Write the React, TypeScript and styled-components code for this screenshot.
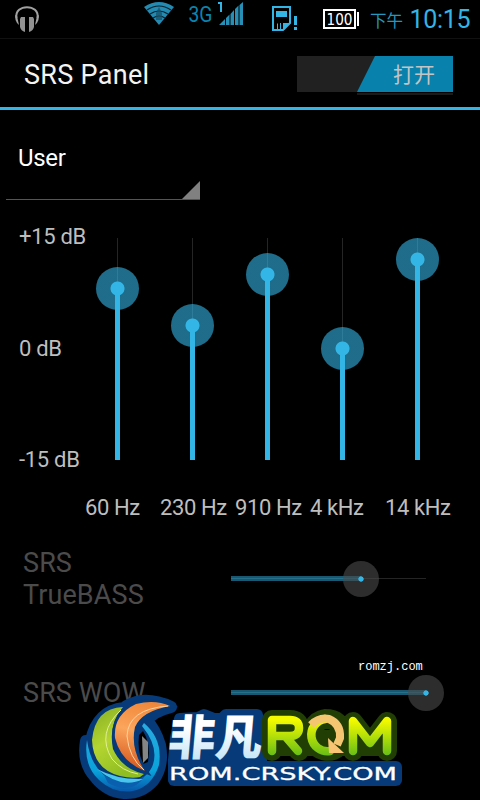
import styled, { createGlobalStyle } from 'styled-components';

const GlobalStyle = createGlobalStyle`
  body {
    margin: 0;
    background: #000;
    overflow: hidden;
  }
`;

const Screen = styled.div`
  position: relative;
  width: 480px;
  height: 800px;
  overflow: hidden;
  background: #000;
  color: #bebebe;
  font-family: Roboto, 'Noto Sans CJK SC', sans-serif;
`;

const StatusBar = styled.div`
  display: flex;
  box-sizing: border-box;
  height: 39px;
  border-bottom: 1px solid #111;
`;

const Header = styled.header`
  display: flex;
  justify-content: space-between;
  box-sizing: border-box;
  height: 71px;
  padding: 17px 27px 0 24px;
  border-bottom: 3px solid #33b5e5;
`;

const Title = styled.h1`
  margin: 4px 0 0;
  color: #f3f3f3;
  font-size: 27px;
  font-weight: 400;
  line-height: 30px;
  letter-spacing: 0.3px;
`;

const Toggle = styled.div`
  width: 156px;
  height: 36px;
  background: #212121;
`;

const ToggleThumb = styled.div`
  box-sizing: border-box;
  width: 96px;
  height: 36px;
  margin-left: 60px;
  padding-left: 36px;
  background: #0882ad;
  clip-path: polygon(18px 0, 100% 0, 100% 100%, 0 100%);
  color: #c4c4c4;
  font-size: 21px;
  line-height: 39px;
`;

const ToggleShadow = styled.div`
  height: 2px;
  margin: 1px 0 0 60px;
  background: #1a1a1a;
`;

const Spinner = styled.div`
  display: flex;
  justify-content: space-between;
  align-items: flex-end;
  box-sizing: border-box;
  width: 194px;
  height: 60px;
  margin: 30px 0 0 6px;
  padding-left: 12px;
  border-bottom: 1px solid #555;
`;

const SpinnerText = styled.span`
  align-self: flex-start;
  padding-top: 4px;
  color: #fff;
  font-size: 24px;
  line-height: 29px;
  letter-spacing: -0.3px;
`;

const SpinnerArrow = styled.i`
  width: 18px;
  height: 18px;
  background: #808080;
  clip-path: polygon(100% 0, 100% 100%, 0 100%);
`;

const Equalizer = styled.section`
  display: flex;
  height: 332px;
  padding: 24px 0 0 19px;
  box-sizing: border-box;
  font-size: 22px;
  line-height: 25px;
`;

const Scale = styled.div`
  display: flex;
  flex-direction: column;
  justify-content: space-between;
  width: 61px;
  height: 248px;
  white-space: nowrap;
  letter-spacing: -0.3px;
`;

const Bands = styled.div`
  display: grid;
  grid-template-columns: repeat(5, 75px);
  padding-top: 14px;
`;

const Band = styled.div`
  display: flex;
  flex-direction: column;
`;

const VTrack = styled.div`
  position: relative;
  width: 1px;
  height: 222px;
  margin-left: 37px;
  background: #252525;
`;

const VFill = styled.div`
  position: absolute;
  left: -2px;
  bottom: 0;
  width: 5px;
  background: #33b5e5;
`;

const VThumb = styled.div`
  position: absolute;
  left: -21px;
  width: 43px;
  height: 43px;
  margin-bottom: -21px;
  border-radius: 50%;
  background: radial-gradient(circle, #33b5e5 6.6px, rgba(51, 181, 229, 0.6) 7.4px);
`;

const BandLabel = styled.span`
  margin: 35px 0 0 5px;
  white-space: nowrap;
  letter-spacing: -0.4px;
`;

const EffectRow = styled.div<{ $height: number }>`
  display: flex;
  align-items: center;
  height: ${p => p.$height}px;
  padding-left: 23px;
`;

const EffectName = styled.span`
  width: 140px;
  margin-right: 68px;
  padding-top: 2px;
  color: #4b4b4b;
  font-size: 27px;
  line-height: 32px;
  letter-spacing: 0.1px;
`;

const HTrack = styled.div`
  position: relative;
  width: 195px;
  height: 1px;
  background: #252525;
`;

const HFill = styled.div`
  position: absolute;
  top: -2px;
  left: 0;
  height: 5px;
  background: linear-gradient(#185872 40%, #286f89 40% 60%, #185872 60%);
`;

const HThumb = styled.div`
  position: absolute;
  top: -17px;
  width: 36px;
  height: 36px;
  margin-left: -18px;
  border-radius: 50%;
  background: radial-gradient(circle, #33b5e5 2.3px, rgba(75, 75, 75, 0.6) 3px);
`;

const SiteTag = styled.div`
  position: absolute;
  top: 659px;
  left: 358px;
  color: #fff;
  font: 12px/16px 'Liberation Mono', monospace;
`;

const Watermark = styled.svg`
  position: absolute;
  left: 75px;
  top: 690px;
`;

const bands = [
  { label: '60 Hz', level: 171 },
  { label: '230 Hz', level: 134 },
  { label: '910 Hz', level: 185 },
  { label: '4 kHz', level: 111 },
  { label: '14 kHz', level: 200 },
];

function StatusIcons() {
  return (
    <svg width="480" height="38" fill="#33b5e5" fontFamily="Roboto, 'Noto Sans CJK SC', sans-serif">
      <path d="M16.5 18C14 3.500 40 3.500 37.500 18" fill="none" stroke="#a1a1a1" strokeWidth="2" />
      <path d="M15 15l2 1 2 9-2-2q-2-3-2-8zM39 15l-2 1-2 9 2-2q2-3 2-8z" fill="#a1a1a1" />
      <path d="M21 17h4v15q-4-1-5-5v-8zM33 17h-4v15q4-1 5-5v-8z" fill="#929292" />
      <path d="M159 25l-15-18Q159-3 174 7z" fill="#238ab2" />
      <path d="M147 10q12-8 24 0M150 14q9-6 18 0M153 18q6-4 12 0" fill="none" stroke="#09222d" strokeWidth="1.2" />
      <path d="M159 7l3 6v7h-6v-7z" fill="#174e65" opacity=".7" />
      <text x="188.500" y="22" fontSize="22" textLength="24" lengthAdjust="spacingAndGlyphs" fill="#0984b0">3G</text>
      <path d="M218 2h4v10h-2V4h-2z" />
      <path d="M219 25l6-6v6zM226 18l3.500-3.500V25H226zM230.500 14l3.500-4v15h-3.500zM235 9l3.500-3.500V25H235zM239.500 5l3.500-3v23h-3.500z" fill="#278eb5" />
      <path d="M273 7h17v16l-7 7h-10z" fill="none" stroke="#33b5e5" strokeWidth="2" />
      <path d="M276 11h11v6h-11zM277 24l1-1v7h-1zM280 23h1v7h-1zM283 23h1v7h-1zM284 23h6l-6 7zM294 16h3v9h-3zM294 27h3v3h-3z" />
      <path d="M324 10h31v18h-31z" fill="none" stroke="#fff" strokeWidth="2" />
      <path d="M357 12h2v14h-2z" fill="#fff" />
      <text x="326.500" y="24.500" fontSize="15.500" textLength="26" lengthAdjust="spacingAndGlyphs" fill="#fff" fontFamily="'DejaVu Sans'">100</text>
      <text x="370" y="26.500" fontSize="16.500" textLength="33" fill="#2596bf">下午</text>
      <text x="409.500" y="27.500" fontSize="25" textLength="61">10:15</text>
    </svg>
  );
}

function Logo() {
  return (
    <Watermark width="340" height="110" viewBox="75 690 340 110">
      <defs>
        <linearGradient id="green" x1="0" y1="0" x2="0.5" y2="1">
          <stop offset="0" stopColor="#83ac22" />
          <stop offset="0.5" stopColor="#b4d531" />
          <stop offset="1" stopColor="#8fbd22" />
        </linearGradient>
        <linearGradient id="orange" x1="0.6" y1="0" x2="0.4" y2="1">
          <stop offset="0" stopColor="#f0873a" />
          <stop offset="0.45" stopColor="#fba55c" />
          <stop offset="1" stopColor="#d4561c" />
        </linearGradient>
        <linearGradient id="ring" x1="0" y1="0" x2="0" y2="1">
          <stop offset="0" stopColor="#29abe0" />
          <stop offset="0.7" stopColor="#09a2da" />
          <stop offset="1" stopColor="#0858ac" />
        </linearGradient>
        <linearGradient id="ice" x1="0" y1="0" x2="0" y2="1">
          <stop offset="0.4" stopColor="#fff" />
          <stop offset="1" stopColor="#b5dff6" />
        </linearGradient>
        <linearGradient id="lime" gradientUnits="userSpaceOnUse" x1="0" y1="716" x2="0" y2="756">
          <stop offset="0.1" stopColor="#f4fb00" />
          <stop offset="1" stopColor="#65bd16" />
        </linearGradient>
      </defs>
      {/* navy backing of the emblem and the wordmark */}
      <g fill="#063a78" stroke="#063a78" strokeWidth="12" strokeLinejoin="round">
        <path d="M86 741Q82 763 96 778Q108 792 124 793Q141 794 153 781Q164 766 160 745Q155 729 147 721Q152 712 171 707Q156 700 142 701Q130 703 124 708Q97 711 91 741z" />
        <path d="M180 719l18-1 6-3 10 4h8l4-4h31l4 44v10h135v10H174V760l2-22z" />
      </g>
      <path d="M143 731Q151 743 148 762l-5 2Q137 750 139 735z" fill="#000" />
      <path d="M142 736l6 6v16l-5 5z" fill="#858585" />
      <path d="M87 740Q83 765 99 780Q114 794 133 791Q152 787 159 765Q163 739 144 723L142 726Q160 748 152 767Q143 785 118 782Q92 775 87 740z" fill="url(#ring)" />
      <path d="M104 775Q126 787 145 776Q132 796 108 783z" fill="#0a5fae" />
      <path d="M97 769Q118 780 143 779Q122 790 97 769z" fill="#49c4ea" />
      <path d="M123 707Q95 708 92 740Q93 769 120 776Q132 779 140 777L144 774Q122 769 113 749Q108 724 123 707z" fill="url(#green)" />
      <path d="M121 710Q96 733 112 759Q122 771 138 774" fill="none" stroke="#e1ef97" />
      {/* navy gap between the two crescents */}
      <path d="M170 706Q155 699 136 704Q113 715 115 738Q121 762 145 771Q130 749 135 727Q142 711 170 706z" fill="url(#orange)" stroke="#063a78" strokeWidth="5" paintOrder="stroke" />
      <path d="M168 706Q128 709 127 736Q129 758 144 770" fill="none" stroke="#ffd2a2" />
      <g fill="none" stroke="#213e05" strokeWidth="20" strokeLinecap="round" strokeLinejoin="round">
        <path d="M272 751v-31h18q9 0 9 8t-9 8h-18M286 737l13 14M325 719a16 16 0 1 0 13 28M353 751v-29l17 22 17-22v29M325 719q16 0 16 14" />
      </g>
      <path d="M276 730h112v26H276z" fill="#213e05" />
      <g fill="none" stroke="url(#lime)" strokeWidth="8.500" strokeLinecap="round" strokeLinejoin="round">
        <path d="M272 751v-31h18q9 0 9 8t-9 8h-18M286 737l12 14M325 719a16 16 0 1 0 5 32M353 751v-30l17 22 17-22v30" />
      </g>
      <path d="M311 725Q319 717 329 719Q341 724 340 738L337 745" fill="none" stroke="#f5c672" strokeWidth="8" />
      <path d="M328 738l1 15 15 0z" fill="#f9c575" />
      <g fontFamily="'Noto Sans CJK SC'" fontWeight="900" fontSize="48" fill="url(#ice)" transform="translate(66 0) skewX(-5)">
        <text x="167" y="755" textLength="94" lengthAdjust="spacingAndGlyphs">非凡</text>
      </g>
      <rect x="168" y="761" width="234" height="25" rx="6" fill="#063a78" />
      <text x="169" y="779.500" fontSize="18.500" fontFamily="'DejaVu Sans'" textLength="228" lengthAdjust="spacingAndGlyphs" fill="#fff" stroke="#fff" strokeWidth=".3">ROM.CRSKY.COM</text>
    </Watermark>
  );
}

function App() {
  return (
    <Screen>
      <GlobalStyle />
      <StatusBar>
        <StatusIcons />
      </StatusBar>
      <Header>
        <Title>SRS Panel</Title>
        <Toggle>
          <ToggleThumb>打开</ToggleThumb>
          <ToggleShadow />
        </Toggle>
      </Header>
      <Spinner>
        <SpinnerText>User</SpinnerText>
        <SpinnerArrow />
      </Spinner>
      <Equalizer>
        <Scale>
          <span>+15 dB</span>
          <span>0 dB</span>
          <span>-15 dB</span>
        </Scale>
        <Bands>
          {bands.map(band => (
            <Band key={band.label}>
              <VTrack>
                <VThumb style={{ bottom: band.level }} />
                <VFill style={{ height: band.level }} />
              </VTrack>
              <BandLabel>{band.label}</BandLabel>
            </Band>
          ))}
        </Bands>
      </Equalizer>
      <EffectRow $height={92}>
        <EffectName>SRS TrueBASS</EffectName>
        <HTrack>
          <HFill style={{ width: 130 }} />
          <HThumb style={{ left: 130 }} />
        </HTrack>
      </EffectRow>
      <EffectRow $height={136}>
        <EffectName>SRS WOW</EffectName>
        <HTrack>
          <HFill style={{ width: 195 }} />
          <HThumb style={{ left: 195 }} />
        </HTrack>
      </EffectRow>
      <SiteTag>romzj.com</SiteTag>
      <Logo />
    </Screen>
  );
}

export default App;
